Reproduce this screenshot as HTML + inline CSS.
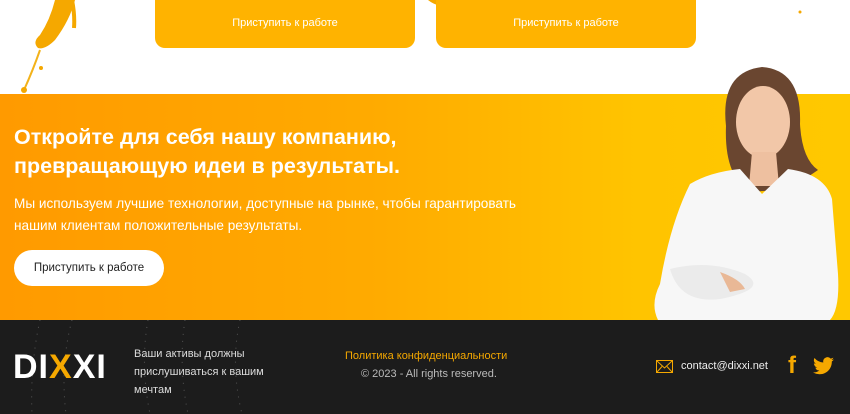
<!DOCTYPE html>
<html><head><meta charset="utf-8"><style>
*{margin:0;padding:0;box-sizing:border-box}
body{width:850px;height:414px;overflow:hidden;background:#fff;font-family:"Liberation Sans","Noto Sans CJK SC",sans-serif;position:relative}
.tb{position:absolute;top:0;height:48px;background:#ffb300;border-radius:0 0 10px 10px;color:#fff;font-size:11px;text-align:center;line-height:46px}
.banner{position:absolute;top:94px;left:0;width:850px;height:226px;background:linear-gradient(90deg,#ff9a00 0%,#ffab00 45%,#ffc400 75%,#ffc800 100%)}
h1{position:absolute;left:14px;top:123px;color:#fff;font-size:21.5px;line-height:29px;font-weight:bold}
p.d{position:absolute;left:14px;top:193px;color:#fff;font-size:13.6px;line-height:22px}
.btn{position:absolute;left:14px;top:250px;width:150px;height:36px;background:#fff;border-radius:18px;font-size:11.5px;color:#222;text-align:center;line-height:36px}
footer{position:absolute;top:320px;left:0;width:850px;height:94px;background:#1c1c1c}
.f{position:absolute;font-size:11px;color:#ddd}
</style></head><body>
<svg style="position:absolute;left:0;top:0" width="850" height="95">
<path d="M55 0 L75 0 Q70 20 55 40 Q45 50 38 48 Q32 42 40 35 Q50 20 55 0Z" fill="#f5a800"/>
<path d="M40 50 Q33 70 24 90" stroke="#f3b21a" stroke-width="2" fill="none"/>
<circle cx="41" cy="68" r="2" fill="#f5a800"/>
<circle cx="24" cy="90" r="3" fill="#f5a800"/>
<path d="M72 0 Q75 15 74 28" stroke="#f5a800" stroke-width="4" fill="none"/>
<path d="M428 0 Q440 10 470 8 Q500 5 520 0Z" fill="#f5a800"/>
<circle cx="800" cy="12" r="1.5" fill="#f5a800"/>
</svg>
<div class="tb" style="left:155px;width:260px">Приступить к работе</div>
<div class="tb" style="left:436px;width:260px">Приступить к работе</div>
<div class="banner"></div>
<h1>Откройте для себя нашу компанию,<br>превращающую идеи в результаты.</h1>
<p class="d">Мы используем лучшие технологии, доступные на рынке, чтобы гарантировать<br>нашим клиентам положительные результаты.</p>
<div class="btn">Приступить к работе</div>
<svg style="position:absolute;left:650px;top:64px" width="200" height="256">
<path d="M76 62 Q70 8 112 3 Q152 6 150 60 Q152 95 168 106 L140 125 L100 128 Q74 112 76 62Z" fill="#6a4630"/>
<ellipse cx="113" cy="58" rx="27" ry="36" fill="#f2c7a8"/>
<path d="M102 88 L126 88 L129 122 L99 122Z" fill="#eec0a0"/>
<path d="M40 120 Q60 108 90 105 L112 130 L138 105 Q175 110 182 135 L188 210 Q190 245 180 256 L8 256 Q0 240 10 220 Q20 160 40 120Z" fill="#f7f7f7"/>
<path d="M20 205 Q60 195 95 210 Q120 225 70 235 Q30 240 20 205Z" fill="#ebebeb"/>
<path d="M70 208 Q90 215 95 225 L80 228Z" fill="#e9b896"/>
</svg>
<footer>
<svg style="position:absolute;left:0;top:0" width="850" height="94">
<path d="M40 0 Q30 45 32 94" stroke="#555" stroke-width="1" stroke-dasharray="1 6" fill="none"/>
<path d="M72 0 Q60 45 66 94" stroke="#555" stroke-width="1" stroke-dasharray="1 6" fill="none"/>
<path d="M148 0 Q140 45 150 94" stroke="#555" stroke-width="1" stroke-dasharray="1 6" fill="none"/>
<path d="M185 0 Q178 45 188 94" stroke="#555" stroke-width="1" stroke-dasharray="1 6" fill="none"/>
<path d="M240 0 Q230 45 242 94" stroke="#555" stroke-width="1" stroke-dasharray="1 6" fill="none"/>
</svg>
<div class="f" style="left:13px;top:30px;font-size:34px;font-weight:bold;color:#fff;letter-spacing:1px;line-height:34px">DI<span style="color:#f5a800">X</span>XI</div>
<div class="f" style="left:134px;top:25px;line-height:18px">Ваши активы должны<br>прислушиваться к вашим<br>мечтам</div>
<div class="f" style="left:345px;top:30px;color:#f5a800">Политика конфиденциальности</div>
<div class="f" style="left:361px;top:48px;color:#bbb">© 2023 - All rights reserved.</div>
<svg style="position:absolute;left:656px;top:40px" width="17" height="13"><rect x="0.5" y="0.5" width="16" height="12" fill="none" stroke="#f5a800"/><path d="M1 1 L8.5 8 L16 1 M1 12 L6 6.5 M16 12 L11 6.5" stroke="#f5a800" fill="none"/></svg>
<div class="f" style="left:681px;top:40px;color:#eee">contact@dixxi.net</div>
<div class="f" style="left:788px;top:32px;font-size:24px;font-weight:bold;color:#f5a800">f</div>
<svg style="position:absolute;left:813px;top:37px" width="21" height="18" viewBox="0 0 24 20"><path d="M24 2.4a10 10 0 0 1-2.8.8A5 5 0 0 0 23.3.4a9.8 9.8 0 0 1-3.1 1.2A4.9 4.9 0 0 0 11.8 6 14 14 0 0 1 1.7.9a4.9 4.9 0 0 0 1.5 6.6A4.9 4.9 0 0 1 1 6.9a4.9 4.9 0 0 0 3.9 4.8 5 5 0 0 1-2.2.1 4.9 4.9 0 0 0 4.6 3.4A9.9 9.9 0 0 1 0 17.2 14 14 0 0 0 7.5 19.4c9.1 0 14-7.5 14-14v-.6A10 10 0 0 0 24 2.4z" fill="#f5a800"/></svg>
</footer>
</body></html>
